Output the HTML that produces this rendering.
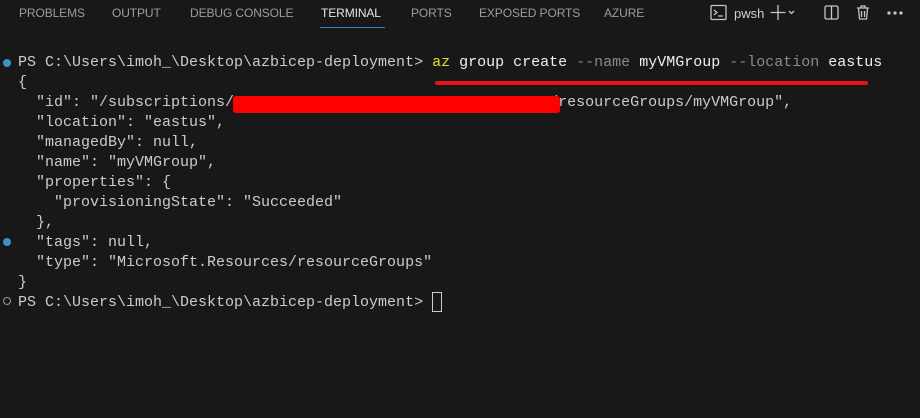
<!DOCTYPE html>
<html><head><style>
body{margin:0;width:920px;height:418px;background:#181818;overflow:hidden;position:relative;font-family:"Liberation Sans",sans-serif}
.tab{position:absolute;top:6px;font-size:12px;color:#9d9d9d;letter-spacing:-0.1px}
.t{position:absolute;left:18px;font-family:"Liberation Mono",monospace;font-size:15px;color:#cccccc;white-space:pre;line-height:20px}
.y{color:#e5e510}.g{color:#8a8a8a}.w{color:#f0f0f0}
</style></head><body>
<div class="tab" style="left:19px">PROBLEMS</div>
<div class="tab" style="left:112px">OUTPUT</div>
<div class="tab" style="left:190px">DEBUG CONSOLE</div>
<div class="tab" style="left:321px;color:#e7e7e7">TERMINAL</div>
<div style="position:absolute;left:320px;top:27px;width:65px;height:1px;background:#3a7bbf"></div>
<div class="tab" style="left:411px">PORTS</div>
<div class="tab" style="left:479px">EXPOSED PORTS</div>
<div class="tab" style="left:604px">AZURE</div>
<svg style="position:absolute;left:708px;top:2px" width="210" height="22" viewBox="0 0 210 22" fill="none" stroke="#c5c5c5" stroke-width="1.3">
<rect x="3" y="3.5" width="15" height="14" rx="1"/><path d="M6 8l3 2.5-3 2.5M10 14h5"/>
<text x="26" y="16" fill="#d0d0d0" stroke="none" font-family="Liberation Sans" font-size="13">pwsh</text>
<path d="M70 3v15M62.5 10.5h15M81 9l2.5 2.5 2.5-2.5"/>
<rect x="117" y="4" width="13" height="13" rx="1.5"/><path d="M123.5 4v13"/>
<path d="M149 6h12M153 6V4h4v2M150.5 6l1 11h7l1-11M153.5 9v6M156.5 9v6"/>
<circle cx="181" cy="11" r="1" fill="#c5c5c5"/><circle cx="187" cy="11" r="1" fill="#c5c5c5"/><circle cx="193" cy="11" r="1" fill="#c5c5c5"/>
</svg>
<div style="position:absolute;left:3px;top:59px;width:8px;height:8px;border-radius:50%;background:#3794c8"></div>
<div style="position:absolute;left:3px;top:238px;width:8px;height:8px;border-radius:50%;background:#3794c8"></div>
<div style="position:absolute;left:3px;top:297px;width:6px;height:6px;border-radius:50%;border:1px solid #999"></div>
<div class="t" style="top:53px">PS C:\Users\imoh_\Desktop\azbicep-deployment&gt; <span class="y">az</span> <span class="w">group create</span> <span class="g">--name</span> <span class="w">myVMGroup</span> <span class="g">--location</span> <span class="w">eastus</span>
{
  "id": "/subscriptions/                                   /resourceGroups/myVMGroup",
  "location": "eastus",
  "managedBy": null,
  "name": "myVMGroup",
  "properties": {
    "provisioningState": "Succeeded"
  },
  "tags": null,
  "type": "Microsoft.Resources/resourceGroups"
}
PS C:\Users\imoh_\Desktop\azbicep-deployment&gt; </div>
<div style="position:absolute;left:435px;top:81px;width:433px;height:4px;background:#e8141a;border-radius:2px"></div>
<div style="position:absolute;left:233px;top:96px;width:327px;height:17px;background:#ff0000;border-radius:3px"></div>
<div style="position:absolute;left:432px;top:292px;width:8px;height:18px;border:1px solid #cccccc"></div>
</body></html>
